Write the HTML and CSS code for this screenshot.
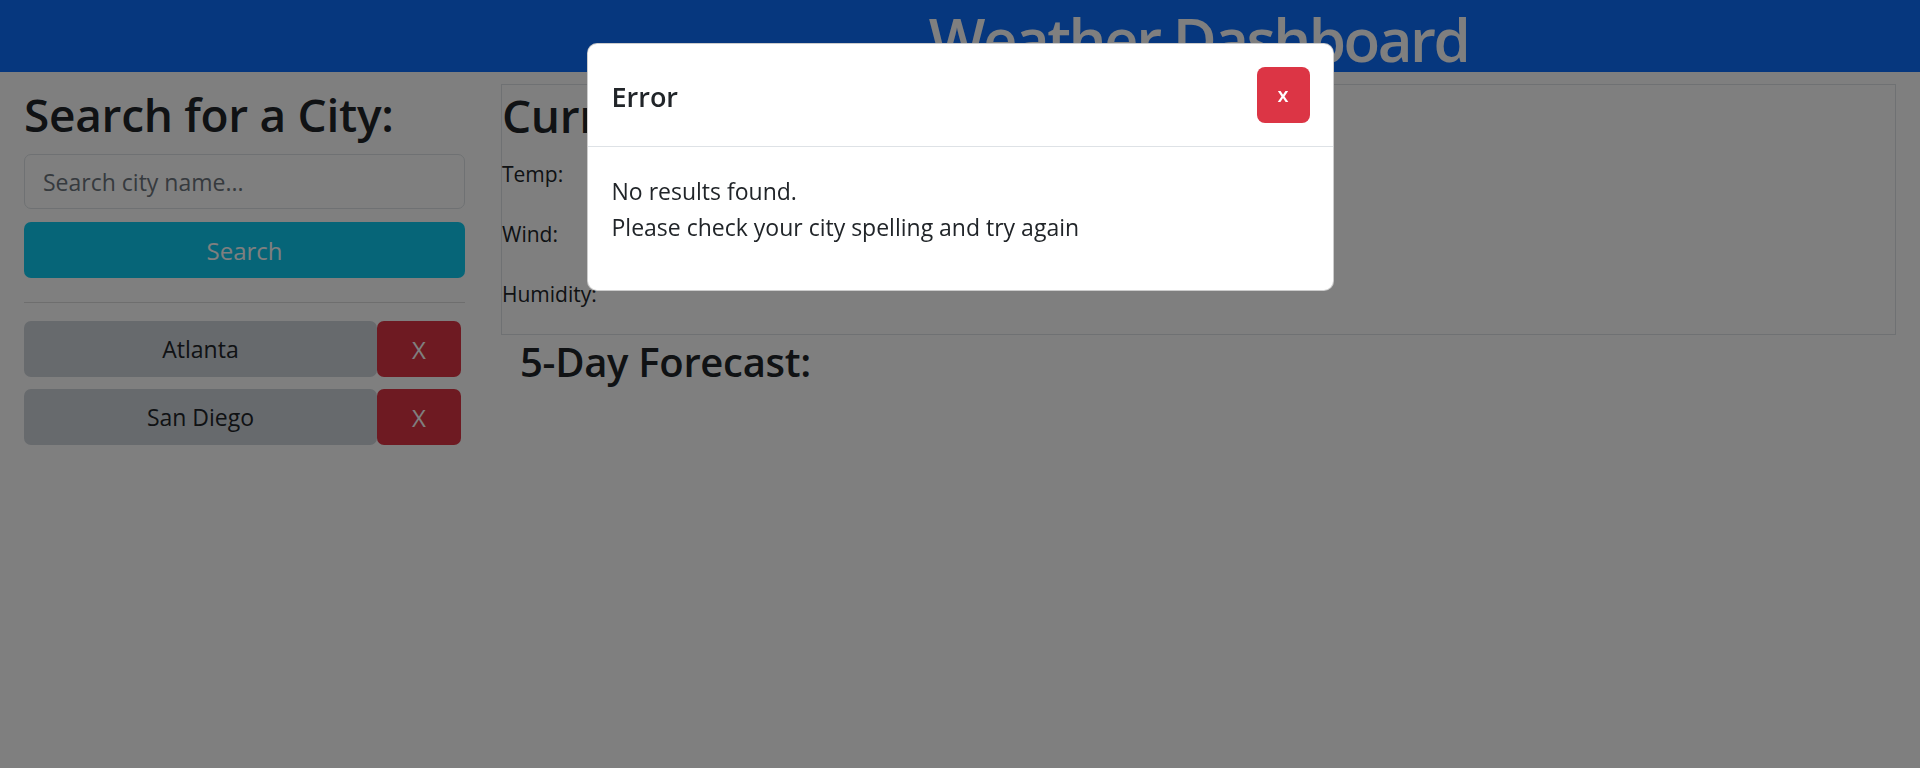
FILE: index.html
```html
<!DOCTYPE html>
<html lang="en">
<head>
<meta charset="utf-8">
<title>Weather Dashboard</title>
<link rel="stylesheet" href="styles.css">
</head>
<body>
<header class="topbar">
  <div class="topbar-spacer"></div>
  <h1 class="app-title">Weather Dashboard</h1>
</header>
<main class="layout">
  <aside class="sidebar">
    <h1 class="side-title">Search for a City:</h1>
    <input class="search-input" type="text" placeholder="Search city name...">
    <button class="search-btn" type="button">Search</button>
    <hr class="divider">
    <div class="history">
      <div class="history-row">
        <button class="city-btn" type="button">Atlanta</button>
        <button class="remove-btn" type="button">X</button>
      </div>
      <div class="history-row">
        <button class="city-btn" type="button">San Diego</button>
        <button class="remove-btn" type="button">X</button>
      </div>
    </div>
  </aside>
  <section class="content">
    <div class="current-card">
      <h1 class="current-title">Current Weather</h1>
      <p class="stat">Temp:</p>
      <p class="stat">Wind:</p>
      <p class="stat">Humidity:</p>
    </div>
    <h2 class="forecast-title">5-Day Forecast:</h2>
  </section>
</main>

<div class="backdrop"></div>
<div class="modal">
  <div class="modal-dialog">
    <div class="modal-header">
      <h5 class="modal-title">Error</h5>
      <button class="modal-close" type="button">x</button>
    </div>
    <div class="modal-body">
      <p class="modal-text">No results found.<br>Please check your city spelling and try again</p>
    </div>
  </div>
</div>
</body>
</html>
```
FILE: styles.css
```css
* { box-sizing: border-box; }

html, body {
  margin: 0;
  padding: 0;
}

body {
  font-family: "Open Sans", "Noto Sans", sans-serif;
  color: #212529;
  background: #ffffff;
  width: 1920px;
  height: 768px;
  overflow: hidden;
}

.topbar {
  height: 72px;
  background: #0d6efd;
  display: grid;
  grid-template-columns: 441px 1fr;
  column-gap: 36px;
  padding: 0 24px;
  overflow: hidden;
}

.app-title {
  margin: 0;
  padding-top: 6px;
  line-height: 66px;
  font-size: 60px;
  font-weight: 600;
  letter-spacing: -2.5px;
  color: #ffffff;
  text-align: center;
  white-space: nowrap;
}

.layout {
  display: grid;
  grid-template-columns: 441px 1fr;
  column-gap: 36px;
  padding: 12px 24px 0;
}

.sidebar {
  display: flex;
  flex-direction: column;
}

.side-title {
  margin: 0 0 10px;
  font-size: 46px;
  line-height: 60px;
  font-weight: 600;
  letter-spacing: -0.3px;
  white-space: nowrap;
}

.search-input {
  height: 55px;
  border: 1px solid #dee2e6;
  border-radius: 7px;
  padding: 0 18px;
  font-family: inherit;
  font-size: 23px;
  color: #212529;
  background: #fff;
}

.search-input::placeholder {
  color: #6c757d;
}

.search-btn {
  margin-top: 13px;
  height: 56px;
  border: none;
  border-radius: 7px;
  background: #0dcaf0;
  color: #ffffff;
  font-family: inherit;
  font-size: 24px;
}

.divider {
  margin: 24px 0 18px;
  border: none;
  border-top: 1px solid #dcdcdc;
  height: 0;
}

.history {
  display: flex;
  flex-direction: column;
  gap: 12px;
}

.history-row {
  display: flex;
  width: 437px;
}

.city-btn {
  width: 353px;
  height: 56px;
  border: none;
  border-radius: 7px;
  background: #ced4da;
  color: #212529;
  font-family: inherit;
  font-size: 23px;
}

.remove-btn {
  width: 84px;
  height: 56px;
  border: none;
  border-radius: 7px;
  background: #dc3545;
  color: #ffffff;
  font-family: inherit;
  font-size: 24px;
}

.content {
  display: flex;
  flex-direction: column;
}

.current-card {
  height: 251px;
  border: 1px solid #dee2e6;
  display: flex;
  flex-direction: column;
}

.current-title {
  margin: 0 0 14px;
  font-size: 46px;
  line-height: 60px;
  font-weight: 600;
  letter-spacing: -0.3px;
  white-space: nowrap;
}

.stat {
  margin: 0 0 30px;
  font-size: 21px;
  line-height: 30px;
}

.forecast-title {
  margin: 2px 0 0;
  padding-left: 19px;
  font-size: 40px;
  line-height: 50px;
  font-weight: 600;
  letter-spacing: -0.3px;
}

.backdrop {
  position: fixed;
  inset: 0;
  background: rgba(0, 0, 0, 0.5);
}

.modal {
  position: fixed;
  inset: 0;
}

.modal-dialog {
  width: 747px;
  margin: 43px auto 0;
  background: #ffffff;
  border: 1px solid rgba(0, 0, 0, 0.2);
  border-radius: 10px;
  overflow: hidden;
}

.modal-header {
  height: 103px;
  display: flex;
  align-items: center;
  justify-content: space-between;
  padding: 0 23px 0 24px;
  border-bottom: 1px solid #dee2e6;
}

.modal-title {
  margin: 0;
  padding-top: 3px;
  font-size: 27px;
  line-height: 32px;
  font-weight: 600;
  color: #212529;
}

.modal-close {
  width: 53px;
  height: 56px;
  border: none;
  border-radius: 8px;
  background: #dc3545;
  color: #ffffff;
  font-family: inherit;
  font-size: 20px;
  font-weight: 600;
  line-height: 1;
  padding: 0;
}

.modal-body {
  padding: 26px 24px 21px;
}

.modal-text {
  margin: 0 0 24px;
  font-size: 23px;
  line-height: 36px;
  color: #212529;
}
```
